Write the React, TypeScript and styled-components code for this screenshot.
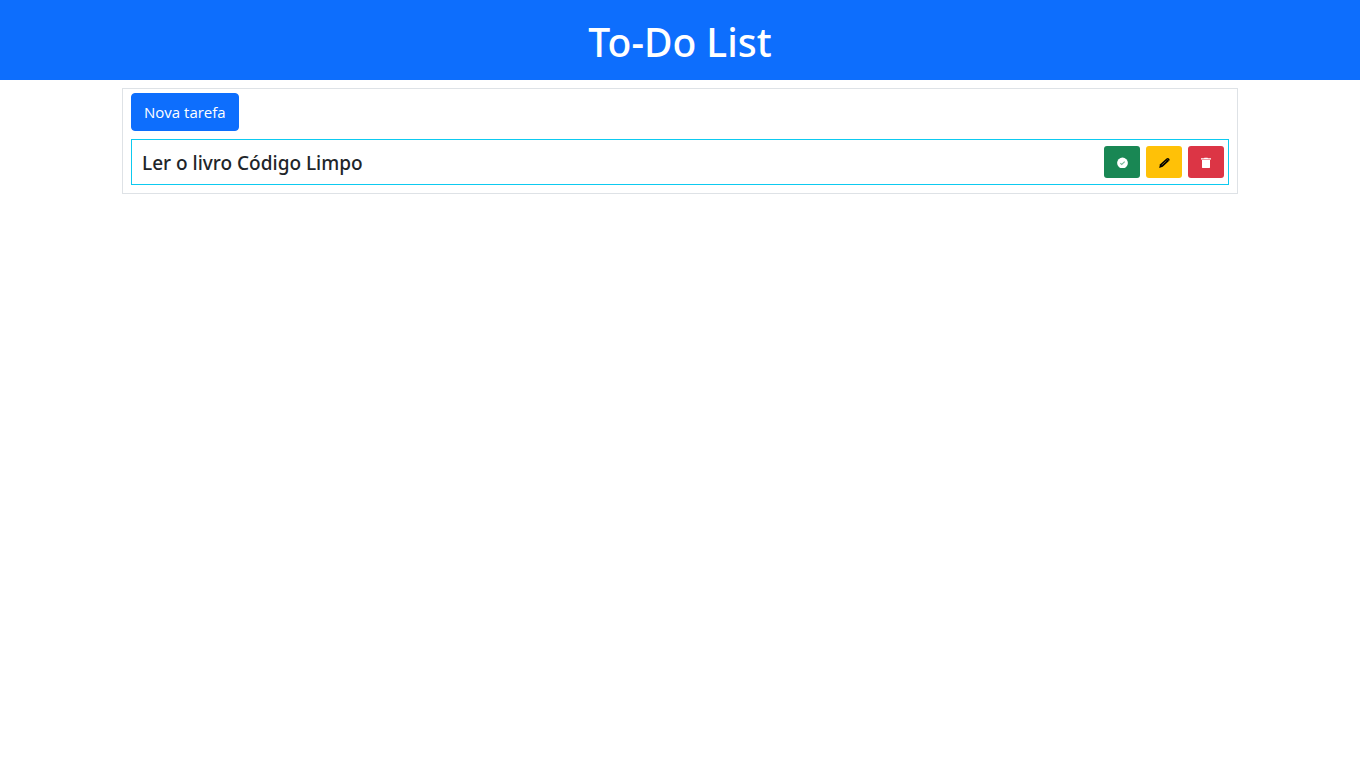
import React from "react";
import styled, { createGlobalStyle } from "styled-components";

const GlobalStyle = createGlobalStyle`
  *, *::before, *::after { box-sizing: border-box; }
  body {
    margin: 0;
    background: #fff;
    color: #212529;
    font-family: "Segoe UI", "Open Sans", "Noto Sans", sans-serif;
    font-size: 15px;
    line-height: 24px;
  }
`;

const Header = styled.header`
  padding: 18px 16px 14px;
  background: #0d6efd;
  color: #fff;
  text-align: center;
`;

const Title = styled.h1`
  margin: 0;
  font-family: "Segoe UI", "Noto Sans", sans-serif;
  font-size: 39px;
  font-weight: 500;
  line-height: 48px;
`;

const Container = styled.main`
  max-width: 1140px;
  margin: 8px auto 0;
  padding: 0 12px;
`;

const Panel = styled.section`
  padding: 4px 8px 8px;
  border: 1px solid #dee2e6;
`;

const NewTaskButton = styled.button`
  display: block;
  padding: 6px 12px;
  border: 1px solid #0d6efd;
  border-radius: 4px;
  background: #0d6efd;
  color: #fff;
  font: inherit;
  cursor: pointer;
`;

const TaskList = styled.ul`
  list-style: none;
  margin: 8px 0 0;
  padding: 0;
`;

const TaskItem = styled.li`
  display: flex;
  align-items: center;
  justify-content: space-between;
  padding: 6px 4px 6px 10px;
  border: 1px solid #0dcaf0;
`;

const TaskName = styled.h2`
  margin: 0;
  padding-top: 2px;
  font-family: "Segoe UI", "Noto Sans", sans-serif;
  font-size: 19px;
  font-weight: 500;
  line-height: 24px;
`;

const Actions = styled.div`
  display: flex;
  gap: 6px;
`;

const ActionButton = styled.button<{ $bg: string; $color?: string }>`
  display: flex;
  align-items: center;
  justify-content: center;
  width: 36px;
  height: 32px;
  padding: 0;
  border: 0;
  border-radius: 3px;
  background: ${(p) => p.$bg};
  color: ${(p) => p.$color ?? "#fff"};
  cursor: pointer;
`;

const Icon = styled.svg`
  display: block;
  width: 12px;
  height: 12px;
`;

function CheckIcon() {
  return (
    <Icon viewBox="0 0 12 12" aria-hidden="true">
      <circle cx="6.5" cy="7" r="5.4" fill="currentColor" />
      <path d="M4.3 7.2l1.400 1.300 3-2.800" fill="none" stroke="#75b798" strokeWidth="1.1" />
    </Icon>
  );
}

function PencilIcon() {
  return (
    <Icon viewBox="0 0 12 12" aria-hidden="true">
      <path
        d="M1.2 11.9l.7-3.4 6.6-5.9q1.3-1 2.4-.2 1.2 1 .3 2.3L4.7 10.8z"
        fill="currentColor"
      />
      <path
        d="M3.7 9.1l4.8-4.4M9.2 3.3l1.2 1.2"
        stroke="#ffc107"
        strokeWidth=".7"
        strokeOpacity=".7"
        fill="none"
      />
    </Icon>
  );
}

function TrashIcon() {
  return (
    <Icon viewBox="0 0 12 12" aria-hidden="true">
      <path d="M1 2.2h3l.5-.4h3l.5.4h3v1.3H1z" fill="currentColor" />
      <path d="M2 4h8v7.200q0 .9-.9.9H2.900q-.9 0-.9-.9z" fill="currentColor" />
    </Icon>
  );
}

const tasks = ["Ler o livro Código Limpo"];

export default function App() {
  return (
    <>
      <GlobalStyle />
      <Header>
        <Title>To-Do List</Title>
      </Header>
      <Container>
        <Panel>
          <NewTaskButton type="button">Nova tarefa</NewTaskButton>
          <TaskList>
            {tasks.map((task) => (
              <TaskItem key={task}>
                <TaskName>{task}</TaskName>
                <Actions>
                  <ActionButton type="button" $bg="#198754" aria-label="Concluir">
                    <CheckIcon />
                  </ActionButton>
                  <ActionButton type="button" $bg="#ffc107" $color="#000" aria-label="Editar">
                    <PencilIcon />
                  </ActionButton>
                  <ActionButton type="button" $bg="#dc3545" aria-label="Excluir">
                    <TrashIcon />
                  </ActionButton>
                </Actions>
              </TaskItem>
            ))}
          </TaskList>
        </Panel>
      </Container>
    </>
  );
}
